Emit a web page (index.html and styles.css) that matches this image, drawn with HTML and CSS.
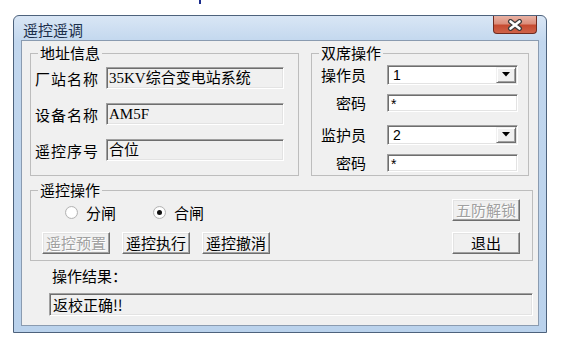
FILE: index.html
```html
<!DOCTYPE html>
<html lang="zh-CN">
<head>
  <meta charset="UTF-8" />
  <title>遥控遥调</title>
  <link rel="stylesheet" href="styles.css">
</head>
<body>

  <div class="mark"></div>

  <div class="window">
    <div class="titlebar">
      <span class="title">遥控遥调</span>
      <button class="close">
        <svg width="16" height="12" viewBox="0 0 16 12">
          <path d="M3.5 2.5 L12.5 9.5 M12.5 2.5 L3.5 9.5" stroke="#3b3b3b" stroke-width="5" stroke-linecap="round" fill="none"/>
          <path d="M3.5 2.5 L12.5 9.5 M12.5 2.5 L3.5 9.5" stroke="#fff" stroke-width="2.6" stroke-linecap="round" fill="none"/>
        </svg>
      </button>
    </div>

    <div class="client">
      <div class="top-row">
        <fieldset class="group group-addr">
          <legend>地址信息</legend>
          <div class="addr">
            <label class="addr-lbl">厂站名称</label>
            <div class="field ro val">35KV综合变电站系统</div>
            <label class="addr-lbl">设备名称</label>
            <div class="field ro val">AM5F</div>
            <label class="addr-lbl">遥控序号</label>
            <div class="field ro val">合位</div>
          </div>
        </fieldset>

        <fieldset class="group group-dual">
          <legend>双席操作</legend>
          <div class="dual">
            <div class="row">
              <label class="lbl">操作员</label>
              <div class="combo">
                <span class="combo-text">1</span>
                <span class="drop">
                  <svg width="8" height="5" viewBox="0 0 8 5"><path d="M0 0 H8 L4 4.5 Z" fill="#000"/></svg>
                </span>
              </div>
            </div>
            <div class="row">
              <label class="lbl">密码</label>
              <div class="field edit pw">*</div>
            </div>
            <div class="row row-gap">
              <label class="lbl">监护员</label>
              <div class="combo">
                <span class="combo-text">2</span>
                <span class="drop">
                  <svg width="8" height="5" viewBox="0 0 8 5"><path d="M0 0 H8 L4 4.5 Z" fill="#000"/></svg>
                </span>
              </div>
            </div>
            <div class="row">
              <label class="lbl">密码</label>
              <div class="field edit pw">*</div>
            </div>
          </div>
        </fieldset>
      </div>

      <fieldset class="group group-op">
        <legend>遥控操作</legend>
        <div class="op">
          <div class="op-left">
            <div class="radios">
              <label class="radio"><span class="dot"></span>分闸</label>
              <label class="radio checked"><span class="dot"></span>合闸</label>
            </div>
            <div class="btn-row">
              <button class="btn" disabled>遥控预置</button>
              <button class="btn">遥控执行</button>
              <button class="btn">遥控撤消</button>
            </div>
          </div>
          <div class="op-right">
            <button class="btn" disabled>五防解锁</button>
            <button class="btn">退出</button>
          </div>
        </div>
      </fieldset>

      <div class="result-label">操作结果：</div>
      <div class="field ro result">返校正确!!</div>
    </div>
  </div>

</body>
</html>
```

FILE: styles.css
```css
* {
  box-sizing: border-box;
}

body {
  margin: 0;
  background: #fff;
  font-family: "Noto Sans CJK SC", sans-serif;
  font-size: 15px;
  color: #000;
}

.mark {
  width: 2px;
  height: 4px;
  margin-left: 199px;
  background: #1b2d8c;
}

/* window frame */
.window {
  margin: 11px 0 0 13px;
  width: 534px;
  height: 318px;
  border: 1px solid #4d627c;
  border-radius: 6px 6px 0 0;
  background: linear-gradient(to bottom, #d9e6f5, #c2d7ee 26px, #bad2ec);
  padding: 0 7px 6px;
  display: flex;
  flex-direction: column;
}

.titlebar {
  height: 24px;
  display: flex;
  align-items: flex-start;
  flex-shrink: 0;
}

.title {
  padding: 2px 0 0 2px;
  line-height: 24px;
  color: #1c2e4a;
}

.close {
  margin-left: auto;
  margin-right: 2px;
  width: 44px;
  height: 18px;
  padding: 0;
  border: 1px solid #6e2b20;
  border-top: 0;
  border-radius: 0 0 4px 4px;
  background: linear-gradient(to bottom, #e9b2a4, #dc8e7b 45%, #c64b31 55%, #cf6249);
  display: flex;
  align-items: center;
  justify-content: center;
}

.client {
  flex: 1;
  border: 1px solid #8a9bb0;
  background: #f0f0f0;
  padding: 4px 0 0 8px;
}

/* group boxes */
.top-row {
  display: flex;
  gap: 12px;
  height: 131px;
}

.group {
  margin: 0;
  padding: 0;
  min-width: 0;
  border: 1px solid #bdbdbd;
}

.group legend {
  margin-left: 7px;
  padding: 0 2px;
  line-height: 16px;
}

.group-addr {
  width: 269px;
}

.group-dual {
  width: 218px;
}

.addr {
  display: grid;
  grid-template-columns: 71px 178px;
  row-gap: 14px;
  align-items: center;
  padding: 6px 0 0 4px;
}

.addr-lbl {
  letter-spacing: 1px;
}

/* sunken fields */
.field {
  border: 1px solid;
  border-color: #a0a0a0 #fff #fff #a0a0a0;
  box-shadow: inset 1px 1px 0 #6e6e6e, inset -1px -1px 0 #e3e3e3;
  white-space: nowrap;
  overflow: hidden;
}

.ro {
  background: #f0f0f0;
}

.edit {
  background: #fff;
}

.val {
  height: 22px;
  padding-left: 2px;
  line-height: 20px;
  font-family: "Liberation Serif", "Noto Sans CJK SC", serif;
}

.dual {
  display: flex;
  flex-direction: column;
  gap: 7px;
  padding-top: 3px;
}

.row {
  display: flex;
  align-items: center;
}

.row-gap {
  margin-top: 4px;
}

.lbl {
  width: 54px;
  margin-right: 21px;
  text-align: right;
}

.combo {
  width: 131px;
  height: 20px;
  display: flex;
  align-items: center;
  background: #fff;
  border: 1px solid;
  border-color: #a0a0a0 #fff #fff #a0a0a0;
  box-shadow: inset 1px 1px 0 #6e6e6e, inset -1px -1px 0 #e3e3e3;
  padding: 0 1px;
}

.combo-text {
  padding-left: 4px;
  font-family: "Liberation Sans", sans-serif;
  font-size: 14px;
}

.drop {
  margin-left: auto;
  width: 20px;
  height: 16px;
  background: #f0f0f0;
  border: 1px solid;
  border-color: #f0f0f0 #6e6e6e #6e6e6e #f0f0f0;
  box-shadow: inset 1px 1px 0 #fff, inset -1px -1px 0 #a0a0a0;
  display: flex;
  align-items: center;
  justify-content: center;
}

.pw {
  width: 131px;
  height: 18px;
  padding-left: 3px;
  line-height: 18px;
  font-family: "Liberation Sans", sans-serif;
  font-size: 14px;
}

/* remote control group */
.group-op {
  margin-top: 6px;
  width: 503px;
  height: 79px;
}

.op {
  display: flex;
  padding: 1px 12px 0 11px;
}

.op-left {
  display: flex;
  flex-direction: column;
}

.radios {
  height: 26px;
  display: flex;
  align-items: center;
  padding-left: 23px;
}

.radio {
  display: flex;
  align-items: center;
  gap: 8px;
}

.radio + .radio {
  margin-left: 37px;
}

.dot {
  width: 13px;
  height: 13px;
  border-radius: 50%;
  border: 1px solid #b4b4b4;
  background: radial-gradient(circle, #fff 55%, #e6e6e6);
  display: flex;
  align-items: center;
  justify-content: center;
}

.checked .dot::after {
  content: "";
  width: 5px;
  height: 5px;
  border-radius: 50%;
  background: #111;
}

.btn-row {
  margin-top: 7px;
  display: flex;
  gap: 12px;
}

.op-right {
  margin-left: auto;
  display: flex;
  flex-direction: column;
  gap: 11px;
}

.btn {
  width: 68px;
  height: 22px;
  padding: 0;
  font-family: inherit;
  font-size: 15px;
  line-height: 18px;
  color: #000;
  background: #f0f0f0;
  border: 1px solid;
  border-color: #fff #6e6e6e #6e6e6e #fff;
  box-shadow: inset -1px -1px 0 #a0a0a0, inset 1px 1px 0 #e3e3e3;
}

.btn:disabled {
  color: #a0a0a0;
  text-shadow: 1px 1px 0 #fff;
}

/* result */
.result-label {
  margin: 5px 0 0 22px;
  line-height: 20px;
}

.result {
  margin: 7px 0 0 19px;
  width: 484px;
  height: 23px;
  padding-left: 3px;
  line-height: 21px;
}
```
